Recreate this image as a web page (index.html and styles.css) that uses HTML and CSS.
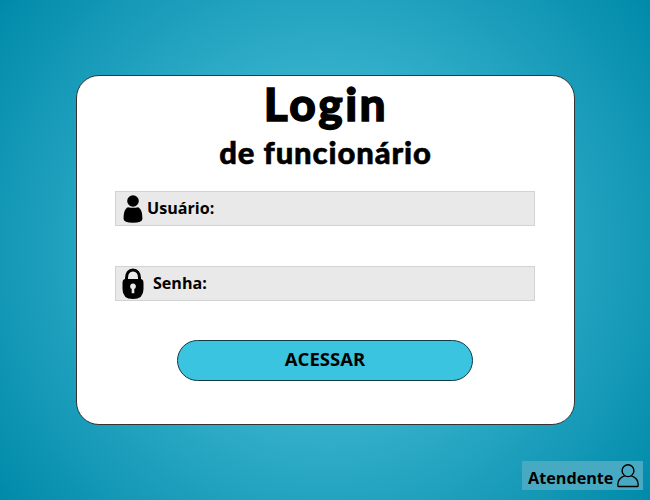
FILE: index.html
```html
<!DOCTYPE html>
<html lang="pt-BR">
<head>
<meta charset="utf-8">
<title>Login de funcionário</title>
<link rel="stylesheet" href="styles.css">
</head>
<body>
<main class="card">
  <h1 class="title">Login</h1>
  <h2 class="subtitle">de funcionário</h2>
  <div class="field user">
    <svg class="user-icon" viewBox="0 0 20 28"><circle cx="10" cy="6" r="5.8"/><path d="M5 12.2Q10 13.500 15 12.2C18 13.500 19.400 17 19.400 24Q19.400 27.700 10 27.700T.6 24C.6 17 2 13.500 5 12.200Z"/></svg>
    <span>Usuário:</span>
  </div>
  <div class="field password">
    <svg class="lock-icon" viewBox="0 0 22 32"><path d="M4.500 13V10C4.500 5 7 2 11 2s6.500 3 6.500 8V13" fill="none" stroke="#000" stroke-width="3"/><path d="M3.500 11h15Q21.500 11 21.500 15v6Q21.500 31 11 31T.5 21v-6Q.5 11 3.500 11Z"/><path d="M9.700 25.200v-4.300a2.900 2.900 0 1 1 2.600 0v4.300Z" fill="#e9e9e9"/></svg>
    <span>Senha:</span>
  </div>
  <button class="submit">ACESSAR</button>
</main>
<footer class="role">
  <span>Atendente</span>
  <svg class="role-icon" viewBox="0 0 22 24"><path d="M7.700 11.800C2.800 13.500.8 16 .8 20.500Q.8 22.500 1.500 22.500h19Q21.200 22.500 21.200 20.500C21.200 16 19.200 13.500 14.300 11.800"/><ellipse cx="11" cy="6.700" rx="5.900" ry="5.900"/></svg>
</footer>
</body>
</html>
```
FILE: styles.css
```css
* { box-sizing: border-box; }
body {
  margin: 0;
  width: 650px;
  height: 500px;
  overflow: hidden;
  display: flex;
  flex-direction: column;
  align-items: center;
  padding-top: 75px;
  color: #000;
  font-family: "Open Sans", sans-serif;
  font-weight: 700;
  background: radial-gradient(circle, #5acbe2, #008aaa);
}
.card {
  width: 499px;
  height: 350px;
  flex: none;
  display: flex;
  flex-direction: column;
  align-items: center;
  background: #fff;
  border: 1px solid #333;
  border-radius: 23px;
}
.title, .subtitle {
  margin: 0;
  font-family: Lato, sans-serif;
  font-weight: 900;
  white-space: nowrap;
}
.title {
  height: 58px;
  padding-left: 2px;
  font-size: 46px;
  line-height: 56px;
  letter-spacing: 2.5px;
  -webkit-text-stroke: 1.3px #000;
}
.subtitle {
  height: 36px;
  padding-left: 1px;
  font-size: 31px;
  line-height: 36px;
  letter-spacing: 0.9px;
  -webkit-text-stroke: 0.6px #000;
}
.field {
  width: 420px;
  height: 35px;
  display: flex;
  align-items: center;
  background: #e9e9e9;
  border: 1px solid #d2d2d2;
  font-size: 16.1px;
}
.field span { padding-bottom: 2px; }
.user { margin-top: 21px; padding-left: 7px; gap: 4px; }
.password { margin-top: 40px; padding-left: 6px; gap: 9px; }
.user-icon { width: 20px; height: 28px; }
.lock-icon { width: 22px; height: 32px; }
.submit {
  width: 296px;
  height: 41px;
  margin-top: 39px;
  padding: 0 0 4px;
  border: 1px solid #123b44;
  border-radius: 21px;
  background: #3bc4df;
  color: #000;
  font: 700 18.5px "Open Sans", sans-serif;
}
.role {
  width: 121px;
  height: 29px;
  margin: 36px 7px 0 auto;
  padding: 1px 4px 0 6px;
  display: flex;
  align-items: center;
  justify-content: space-between;
  background: #48aac2;
  font-size: 16.2px;
}
.role span { padding-top: 4px; }
.role-icon { width: 22px; height: 24px; flex: none; fill: none; stroke: #000; stroke-width: 1.4; }
```
